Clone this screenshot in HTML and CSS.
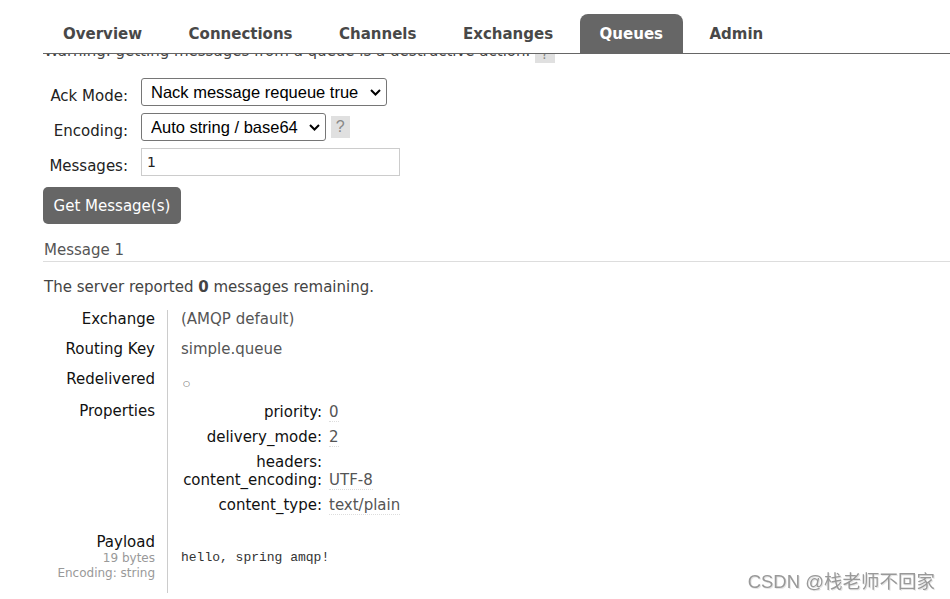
FILE: index.html
```html
<!DOCTYPE html>
<html lang="en">
  <head>
    <meta charset="UTF-8" />
    <meta name="viewport" content="width=device-width, initial-scale=1.0" />
    <title>RabbitMQ Management - Queues</title>
    <link rel="stylesheet" href="styles.css">
  </head>
  <body>
    <div class="header">
      <ul class="tabs">
        <li><a href="#">Overview</a></li>
        <li><a href="#">Connections</a></li>
        <li><a href="#">Channels</a></li>
        <li><a href="#">Exchanges</a></li>
        <li class="selected"><a href="#">Queues</a></li>
        <li><a href="#">Admin</a></li>
      </ul>
    </div>

    <div class="main">
      <p class="warning">
        Warning: getting messages from a queue is a destructive action.
        <span class="help">?</span>
      </p>

      <form class="get-form">
        <table class="form">
          <tr>
            <th><label>Ack Mode:</label></th>
            <td>
              <span class="select-wrap">
                <select class="ack-mode">
                  <option>Nack message requeue true</option>
                </select>
                <svg class="chevron" width="11" height="7" viewBox="0 0 11 7">
                  <polyline points="1,1 5.5,5.5 10,1" fill="none" stroke="#000" stroke-width="2" />
                </svg>
              </span>
            </td>
          </tr>
          <tr>
            <th><label>Encoding:</label></th>
            <td>
              <span class="select-wrap">
                <select class="encoding">
                  <option>Auto string / base64</option>
                </select>
                <svg class="chevron" width="11" height="7" viewBox="0 0 11 7">
                  <polyline points="1,1 5.5,5.5 10,1" fill="none" stroke="#000" stroke-width="2" />
                </svg>
              </span>
              <span class="help help-big">?</span>
            </td>
          </tr>
          <tr>
            <th><label>Messages:</label></th>
            <td><input type="text" class="count" value="1" /></td>
          </tr>
        </table>
        <input type="button" class="button" value="Get Message(s)" />
      </form>

      <h3 class="msg-title">Message 1</h3>
      <p class="remaining">The server reported <b>0</b> messages remaining.</p>

      <table class="facts">
        <tr>
          <th>Exchange</th>
          <td>(AMQP default)</td>
        </tr>
        <tr>
          <th>Routing Key</th>
          <td>simple.queue</td>
        </tr>
        <tr class="redelivered">
          <th>Redelivered</th>
          <td><span class="bool">○</span></td>
        </tr>
        <tr>
          <th>Properties</th>
          <td>
            <table class="props">
              <tr>
                <th>priority:</th>
                <td><abbr>0</abbr></td>
              </tr>
              <tr>
                <th>delivery_mode:</th>
                <td><abbr>2</abbr></td>
              </tr>
              <tr class="empty">
                <th>headers:</th>
                <td></td>
              </tr>
              <tr>
                <th>content_encoding:</th>
                <td><abbr>UTF-8</abbr></td>
              </tr>
              <tr>
                <th>content_type:</th>
                <td><abbr>text/plain</abbr></td>
              </tr>
            </table>
          </td>
        </tr>
        <tr class="payload-row">
          <th>
            Payload
            <sub>19 bytes</sub>
            <sub>Encoding: string</sub>
          </th>
          <td><pre>hello, spring amqp!</pre></td>
        </tr>
      </table>
    </div>

    <div class="watermark">CSDN @栈老师不回家</div>
  </body>
</html>
```

FILE: styles.css
```css
html,
body {
  margin: 0;
  padding: 0;
}

body {
  font-family: "DejaVu Sans", Verdana, sans-serif;
  font-size: 15px;
  line-height: 18px;
  color: #444;
  background: #fff;
}

/* fixed header with tabs, page content scrolls under it */
.header {
  position: fixed;
  top: 0;
  left: 43px;
  right: 0;
  height: 53px;
  background: #fff;
  border-bottom: 1px solid #666;
  z-index: 2;
}

.tabs {
  display: flex;
  gap: 6.5px;
  margin: 0;
  padding: 14px 0 0 0;
  list-style: none;
}

.tabs li a {
  display: block;
  height: 37px;
  padding: 2px 20px 0 20px;
  line-height: 37px;
  font-weight: bold;
  color: #484848;
  text-decoration: none;
  border-radius: 8px 8px 0 0;
}

.tabs li.selected a {
  background: #666;
  color: #fff;
}

.main {
  padding: 42px 0 40px 43px;
}

.warning {
  margin: 0;
  padding-left: 1px;
  color: #444;
}

.help {
  display: inline-block;
  padding: 0 6px;
  line-height: 18px;
  background: #e0e0e0;
  color: #888;
  font-size: 14px;
  vertical-align: -3px;
}

.help-big {
  padding: 0 5px;
  line-height: 22px;
  font-family: "Liberation Sans", Arial, sans-serif;
  font-size: 16px;
  vertical-align: middle;
}

.get-form {
  margin-top: 15px;
}

.form {
  border-collapse: collapse;
}

.form th {
  width: 85px;
  padding: 9px 13px 7px 0;
  text-align: right;
  font-weight: normal;
  color: #222;
  vertical-align: top;
  white-space: nowrap;
}

.form td {
  padding: 0 0 7px 0;
  vertical-align: top;
}

.select-wrap {
  position: relative;
  display: inline-block;
  vertical-align: middle;
}

.form select {
  -webkit-appearance: none;
  appearance: none;
  display: block;
  height: 28px;
  padding: 0 24px 0 9px;
  border: 1px solid #767676;
  border-radius: 3px;
  background: #fff;
  color: #000;
  font-family: "Liberation Sans", Arial, sans-serif;
  font-size: 16.5px;
}

.chevron {
  position: absolute;
  top: 11px;
  right: 6px;
  pointer-events: none;
}

.ack-mode {
  width: 246px;
}

.encoding {
  width: 185px;
}

.count {
  box-sizing: border-box;
  width: 259px;
  height: 28px;
  padding: 0 5px;
  border: 1px solid #ccc;
  font-family: "DejaVu Sans", Verdana, sans-serif;
  font-size: 14px;
  color: #222;
}

.button {
  display: block;
  width: 138px;
  height: 37px;
  margin-top: 4px;
  border: 0;
  border-radius: 5px;
  background: #666;
  color: #fff;
  font-family: "DejaVu Sans", Verdana, sans-serif;
  font-size: 15px;
  cursor: pointer;
}

.msg-title {
  margin: 17px 0 0 0;
  padding: 0 0 2px 1px;
  font-size: 15px;
  font-weight: normal;
  color: #555;
  border-bottom: 1px solid #ddd;
}

.remaining {
  margin: 16px 0 0 0;
  padding-left: 1px;
}

.facts {
  margin-top: 14px;
  border-collapse: collapse;
}

.facts > tbody > tr > th {
  width: 112px;
  padding: 0 12px 12px 0;
  text-align: right;
  font-weight: normal;
  color: #111;
  vertical-align: top;
  white-space: nowrap;
}

.facts > tbody > tr > td {
  padding: 0 0 12px 13px;
  border-left: 1px solid #ccc;
  color: #555;
  vertical-align: top;
}

.facts > tbody > tr.redelivered > th,
.facts > tbody > tr.redelivered > td {
  padding-bottom: 14px;
}

.bool {
  padding-left: 2px;
  font-size: 8px;
  line-height: 1;
  vertical-align: -2px;
  color: #555;
}

.props {
  margin-top: 1px;
  border-collapse: collapse;
}

.props th {
  width: 141px;
  padding: 0 7px 7px 0;
  text-align: right;
  font-weight: normal;
  color: #111;
  white-space: nowrap;
}

.props td {
  padding: 0 0 7px 0;
  color: #555;
}

.props tr.empty th,
.props tr.empty td {
  padding-bottom: 0;
}

.props abbr {
  border-bottom: 1px dotted #ddd;
  text-decoration: none;
}

.payload-row sub {
  display: block;
  font-size: 12px;
  line-height: 15px;
  color: #999;
  vertical-align: baseline;
}

.facts > tbody > tr.payload-row > td {
  vertical-align: middle;
}

.payload-row pre {
  margin: 0;
  padding-top: 2px;
  font-family: "Liberation Mono", "Courier New", monospace;
  font-size: 13px;
  color: #333;
}

.watermark {
  position: fixed;
  right: 15px;
  bottom: 8px;
  font-family: "Liberation Sans", "Noto Sans CJK SC", sans-serif;
  font-size: 18.5px;
  color: #999;
  text-shadow: 1px 1px 0 #e6e6e6;
}
```
